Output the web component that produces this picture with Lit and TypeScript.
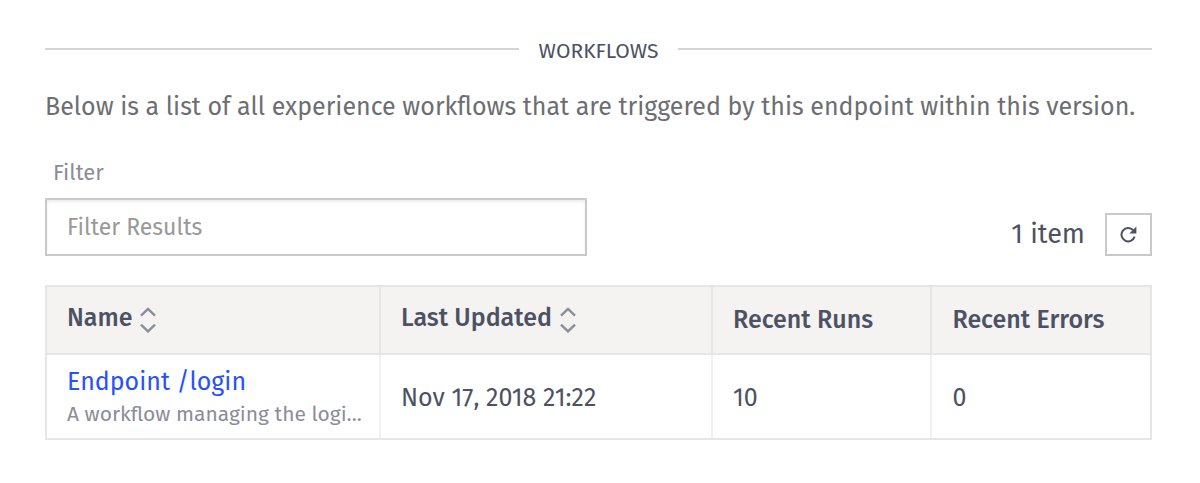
import { LitElement, html, css, svg } from "lit";
import { customElement, state } from "lit/decorators.js";

interface Workflow {
  name: string;
  description: string;
  updated: string;
  runs: number;
  errors: number;
}

const sortIcon = html`<svg class="sort-icon" width="16" height="26" viewBox="0 0 16 26" aria-hidden="true">
  ${svg`<path d="M1 8.6 L8 1.8 L15 8.6 M1 17.6 L8 24.4 L15 17.6" />`}
</svg>`;

const refreshIcon = html`<svg class="refresh-icon" width="17" height="17" viewBox="0 0 17 17" aria-hidden="true">
  ${svg`<path class="arc" d="M13.2 4.2 A6.7 6.7 0 1 0 14.6 10.6" /><path class="head" d="M16.4 0.5 V7.4 H9.3 Z" />`}
</svg>`;

@customElement("app-root")
export class AppRoot extends LitElement {
  static styles = css`
    :host {
      display: block;
      box-sizing: border-box;
      padding: 35px 48px 40px 45px;
      background: #fff;
      color: #4c5264;
      font-family: "Fira Sans", "Noto Sans", sans-serif;
      font-size: 25px;
      line-height: 32px;
    }
    * {
      box-sizing: border-box;
    }
    .divider {
      display: flex;
      align-items: center;
      gap: 20px;
    }
    .divider::before,
    .divider::after {
      content: "";
      flex: 1;
      height: 2px;
      background: #d3d4d5;
    }
    .title {
      margin: 0;
      padding-top: 4px;
      font-size: 21px;
      font-weight: 400;
      line-height: 24px;
      text-transform: uppercase;
    }
    .intro {
      margin: 28px 0 36px;
      color: #6d6e72;
      white-space: nowrap;
    }
    .toolbar {
      display: flex;
      align-items: flex-end;
      justify-content: space-between;
    }
    .filter {
      display: flex;
      flex-direction: column;
      gap: 11px;
      width: 49%;
    }
    .filter-label {
      padding-left: 8px;
      color: #8b8d99;
      font-size: 22px;
      line-height: 28px;
    }
    .filter-input {
      width: 100%;
      height: 58px;
      padding: 0 20px;
      border: 2px solid #c9c9c9;
      border-radius: 0;
      background: #fff;
      box-shadow: inset 0 2px 3px #ececec;
      color: inherit;
      font: inherit;
      font-size: 23px;
    }
    .filter-input::placeholder {
      color: #999;
      opacity: 1;
    }
    .summary {
      display: flex;
      align-items: center;
      gap: 20px;
    }
    .count {
      padding-bottom: 2px;
      font-size: 27px;
    }
    .refresh {
      display: flex;
      align-items: center;
      justify-content: center;
      width: 47px;
      height: 43px;
      padding: 0;
      border: 2px solid #c9c9c9;
      background: #fff;
      color: inherit;
    }
    .refresh-icon .arc {
      fill: none;
      stroke: currentColor;
      stroke-width: 2;
    }
    .refresh-icon .head {
      fill: currentColor;
    }
    .grid {
      width: 100%;
      margin-top: 29px;
      border: 2px solid #e4e6e8;
      border-spacing: 0;
      table-layout: fixed;
    }
    .wide {
      width: 30.1%;
    }
    .narrow {
      width: 19.9%;
    }
    .head-cell,
    .cell {
      padding: 0 10px 0 20px;
      text-align: left;
      vertical-align: middle;
      white-space: nowrap;
    }
    .head-cell {
      height: 68px;
      border-bottom: 2px solid #e4e6e8;
      background: #f5f3f2;
      font-weight: 500;
    }
    .cell {
      height: 83px;
      padding-top: 2px;
    }
    .head-cell + .head-cell {
      border-left: 2px solid #e4e6e8;
    }
    .cell + .cell {
      border-left: 2px solid #f0f1f2;
    }
    .sort {
      display: flex;
      align-items: center;
      gap: 8px;
      padding: 0;
      border: 0;
      background: none;
      color: inherit;
      font: inherit;
    }
    .sort-text {
      padding-bottom: 4px;
    }
    .sort-icon {
      fill: none;
      stroke: #8b8f99;
      stroke-width: 2.4;
    }
    .link {
      display: block;
      color: #2950ff;
      text-decoration: none;
    }
    .description {
      display: block;
      color: #8b8d99;
      font-size: 21px;
    }
  `;

  @state() private query = "";
  @state() private ascending = true;

  private workflows: Workflow[] = [
    {
      name: "Endpoint /login",
      description: "A workflow managing the logi...",
      updated: "Nov 17, 2018 21:22",
      runs: 10,
      errors: 0,
    },
  ];

  private toggleSort() {
    this.ascending = !this.ascending;
  }

  private get rows() {
    const needle = this.query.toLowerCase();
    const found = this.workflows.filter((w) => w.name.toLowerCase().includes(needle));
    return this.ascending ? found : found.reverse();
  }

  private sortable(text: string) {
    return html`<th class="head-cell" scope="col">
      <button class="sort" type="button" @click=${this.toggleSort}>
        <span class="sort-text">${text}</span>${sortIcon}
      </button>
    </th>`;
  }

  render() {
    const rows = this.rows;
    return html`
      <header class="divider"><h2 class="title">Workflows</h2></header>
      <p class="intro">
        Below is a list of all experience workflows that are triggered by this endpoint within this version.
      </p>
      <div class="toolbar">
        <div class="filter">
          <label class="filter-label" for="filter">Filter</label>
          <input
            id="filter"
            class="filter-input"
            type="text"
            placeholder="Filter Results"
            .value=${this.query}
            @input=${(e: Event) => (this.query = (e.target as HTMLInputElement).value)}
          />
        </div>
        <div class="summary">
          <span class="count">${rows.length} ${rows.length === 1 ? "item" : "items"}</span>
          <button class="refresh" type="button" aria-label="Refresh" @click=${() => this.requestUpdate()}>
            ${refreshIcon}
          </button>
        </div>
      </div>
      <table class="grid">
        <colgroup>
          <col class="wide" />
          <col class="wide" />
          <col class="narrow" />
          <col class="narrow" />
        </colgroup>
        <thead>
          <tr>
            ${this.sortable("Name")} ${this.sortable("Last Updated")}
            <th class="head-cell" scope="col">Recent Runs</th>
            <th class="head-cell" scope="col">Recent Errors</th>
          </tr>
        </thead>
        <tbody>
          ${rows.map(
            (w) => html`<tr>
              <td class="cell">
                <a class="link" href="#login">${w.name}</a>
                <span class="description">${w.description}</span>
              </td>
              <td class="cell">${w.updated}</td>
              <td class="cell">${w.runs}</td>
              <td class="cell">${w.errors}</td>
            </tr>`,
          )}
        </tbody>
      </table>
    `;
  }
}
